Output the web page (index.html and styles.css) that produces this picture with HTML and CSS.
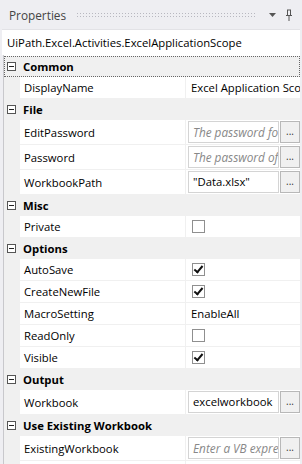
FILE: index.html
```html
<!DOCTYPE html>
<html lang="en">
<head>
    <meta charset="UTF-8">
    <title>Properties</title>
    <link rel="stylesheet" href="styles.css">
</head>
<body>
    <div class="panel">
        <!-- title bar -->
        <div class="title-bar">
            <span class="title">Properties</span>
            <span class="grip"></span>
            <svg class="tb-icon" width="10" height="10" viewBox="0 0 10 10"><path d="M1 3h7L4.5 7z" fill="#555"/></svg>
            <svg class="tb-icon" width="10" height="12" viewBox="0 0 10 12"><path d="M3 1h4M3.5 1v5M6.5 1v5M2 6.5h6M5 7v5" stroke="#555" stroke-width="1" fill="none"/></svg>
        </div>

        <div class="type-name">UiPath.Excel.Activities.ExcelApplicationScope</div>

        <!-- property grid -->
        <div class="grid">
            <div class="cat focused"><span class="exp"></span>Common</div>
            <div class="prop"><span class="name">DisplayName</span><span class="value">Excel Application Scope</span></div>

            <div class="cat"><span class="exp"></span>File</div>
            <div class="prop tall"><span class="name">EditPassword</span><span class="value"><span class="box hint">The password for the workbook</span><span class="dots">...</span></span></div>
            <div class="prop tall"><span class="name">Password</span><span class="value"><span class="box hint">The password of the workbook</span><span class="dots">...</span></span></div>
            <div class="prop tall"><span class="name">WorkbookPath</span><span class="value"><span class="box">"Data.xlsx"</span><span class="dots">...</span></span></div>

            <div class="cat"><span class="exp"></span>Misc</div>
            <div class="prop"><span class="name">Private</span><span class="value"><span class="check"></span></span></div>

            <div class="cat"><span class="exp"></span>Options</div>
            <div class="prop"><span class="name">AutoSave</span><span class="value"><span class="check on"></span></span></div>
            <div class="prop"><span class="name">CreateNewFile</span><span class="value"><span class="check on"></span></span></div>
            <div class="prop"><span class="name">MacroSetting</span><span class="value">EnableAll</span></div>
            <div class="prop"><span class="name">ReadOnly</span><span class="value"><span class="check"></span></span></div>
            <div class="prop"><span class="name">Visible</span><span class="value"><span class="check on"></span></span></div>

            <div class="cat"><span class="exp"></span>Output</div>
            <div class="prop tall"><span class="name">Workbook</span><span class="value"><span class="box">excelworkbook</span><span class="dots">...</span></span></div>

            <div class="cat"><span class="exp"></span>Use Existing Workbook</div>
            <div class="prop tall"><span class="name">ExistingWorkbook</span><span class="value"><span class="box hint">Enter a VB expression</span><span class="dots">...</span></span></div>
            <div class="prop filler"><span class="name"></span><span class="value"></span></div>
        </div>
    </div>
</body>
</html>
```

FILE: styles.css
```css
/* base */
body {
    margin: 0;
    font-family: 'Open Sans', 'Noto Sans', sans-serif;
    font-size: 11.3px;
    color: #000;
    background-color: #eeeef2;
}

.panel {
    width: 302px;
    height: 464px;
    overflow: hidden;
}

/* title bar */
.title-bar {
    display: flex;
    align-items: center;
    height: 29px;
    padding: 0 8px 0 9px;
    box-sizing: border-box;
}

.title {
    color: #444;
    font-size: 11.8px;
}

.grip {
    flex: 1;
    height: 5px;
    margin: 0 6px 0 10px;
    background-image: radial-gradient(#b8b8c0 0.7px, transparent 0.8px);
    background-size: 3px 3px;
}

.tb-icon {
    margin-left: 6px;
}

/* selected object */
.type-name {
    background-color: #fff;
    margin: 0 2px 0 2px;
    padding: 3px 5px;
    height: 19px;
    line-height: 19px;
    border-top: 1px solid #e2e2e6;
}

/* grid */
.grid {
    margin: 0 2px 0 3px;
    border-left: 1px solid #c8c8cc;
    background-color: #fff;
    padding-top: 1px;
}

.cat {
    display: flex;
    align-items: center;
    height: 21px;
    background-color: #f0f0f0;
    font-weight: bold;
    box-sizing: border-box;
}

.cat.focused {
    outline: 1px dotted #666;
    outline-offset: -1px;
}

.exp {
    width: 9px;
    height: 9px;
    border: 1px solid #555;
    box-sizing: border-box;
    margin: 0 7px 0 3px;
    position: relative;
    background-color: #fff;
}

.exp::after {
    content: '';
    position: absolute;
    left: 1px;
    top: 3px;
    width: 5px;
    height: 1px;
    background-color: #222;
}

.prop {
    display: flex;
    height: 22px;
    border-left: 16px solid #f0f0f0;
    box-sizing: border-box;
}

.prop.tall {
    height: 25px;
}

.prop.filler {
    height: 10px;
}

.name {
    width: 166px;
    flex: none;
    padding-left: 4px;
    display: flex;
    align-items: center;
    border-right: 1px solid #f0f0f0;
    border-bottom: 1px solid #f0f0f0;
    box-sizing: border-box;
}

.value {
    flex: 1;
    display: flex;
    align-items: center;
    padding-left: 5px;
    border-bottom: 1px solid #f0f0f0;
    white-space: nowrap;
    overflow: hidden;
    min-width: 0;
}

.prop.tall .value {
    padding-left: 2px;
}

.box {
    width: 91px;
    height: 22px;
    line-height: 20px;
    border: 1px solid #d4d4d4;
    box-sizing: border-box;
    padding-left: 4px;
    overflow: hidden;
    white-space: nowrap;
    flex: none;
}

.hint {
    color: #888;
    font-style: italic;
    font-size: 11.8px;
}

.dots {
    width: 20px;
    height: 22px;
    margin-left: 1px;
    border: 1px solid #b8b8b8;
    background-color: #f0f0f0;
    box-sizing: border-box;
    font-size: 10px;
    line-height: 18px;
    text-align: center;
    color: #333;
    flex: none;
}

.check {
    width: 13px;
    height: 13px;
    border: 1px solid #8f8f8f;
    box-sizing: border-box;
    position: relative;
    margin-left: 1px;
}

.check.on::after {
    content: '';
    position: absolute;
    left: 3px;
    top: 0px;
    width: 3px;
    height: 7px;
    border-right: 2px solid #111;
    border-bottom: 2px solid #111;
    transform: rotate(40deg);
}
```
